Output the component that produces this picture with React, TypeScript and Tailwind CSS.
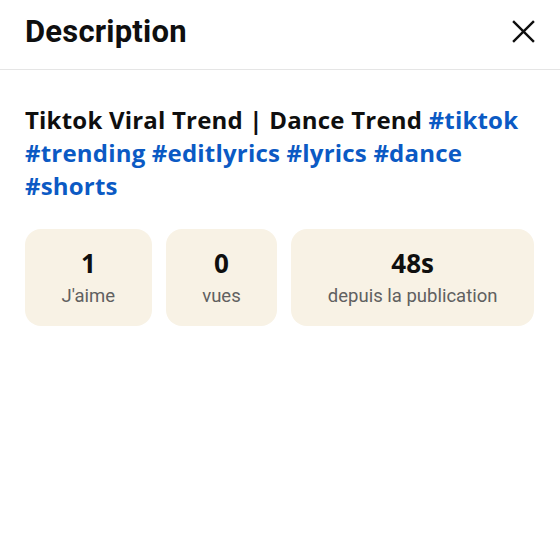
export default function App() {
  const stats = [
    { value: "1", label: "J'aime" },
    { value: "0", label: "vues" },
    { value: "48s", label: "depuis la publication" },
  ];
  return (
    <div className="w-[560px] h-[560px] bg-white font-['Roboto',sans-serif]">
      <div className="flex items-center justify-between h-[70px] pl-[25px] pr-[24px] border-b border-[#e5e5e5]">
        <h1 className="text-[31px] font-bold text-[#0f0f0f] leading-none pb-[6px] tracking-[0.2px]">
          Description
        </h1>
        <svg
          width="25"
          height="25"
          viewBox="0 0 24 24"
          className="mb-[6px]"
          fill="none"
          stroke="#0f0f0f"
          strokeWidth="2.3"
        >
          <path d="M2 2 L22 22 M22 2 L2 22" />
        </svg>
      </div>
      <div className="px-[25px] pt-[33px]">
        <p className="text-[24px] font-bold leading-[33px] text-[#0f0f0f] font-['Open_Sans',sans-serif] tracking-[0.2px]">
          Tiktok Viral Trend | Dance Trend{" "}
          <span className="text-[#0b5ac4]">#tiktok</span>{" "}
          <span className="text-[#0b5ac4]">#trending</span>{" "}
          <span className="text-[#0b5ac4]">#editlyrics</span>{" "}
          <span className="text-[#0b5ac4]">#lyrics</span>{" "}
          <span className="text-[#0b5ac4]">#dance</span>{" "}
          <span className="text-[#0b5ac4]">#shorts</span>
        </p>
        <div className="flex gap-[14px] mt-[27px] w-[509px]">
          {stats.map((s, i) => (
            <div
              key={i}
              className="flex-auto flex flex-col items-center justify-center h-[97px] px-[30px] rounded-[16px] bg-[#f8f2e5]"
            >
              <span className="text-[26px] font-bold text-[#0f0f0f] leading-none font-['Open_Sans',sans-serif]">
                {s.value}
              </span>
              <span className="text-[18.5px] text-[#606060] mt-[11px] leading-none">
                {s.label}
              </span>
            </div>
          ))}
        </div>
      </div>
    </div>
  );
}
